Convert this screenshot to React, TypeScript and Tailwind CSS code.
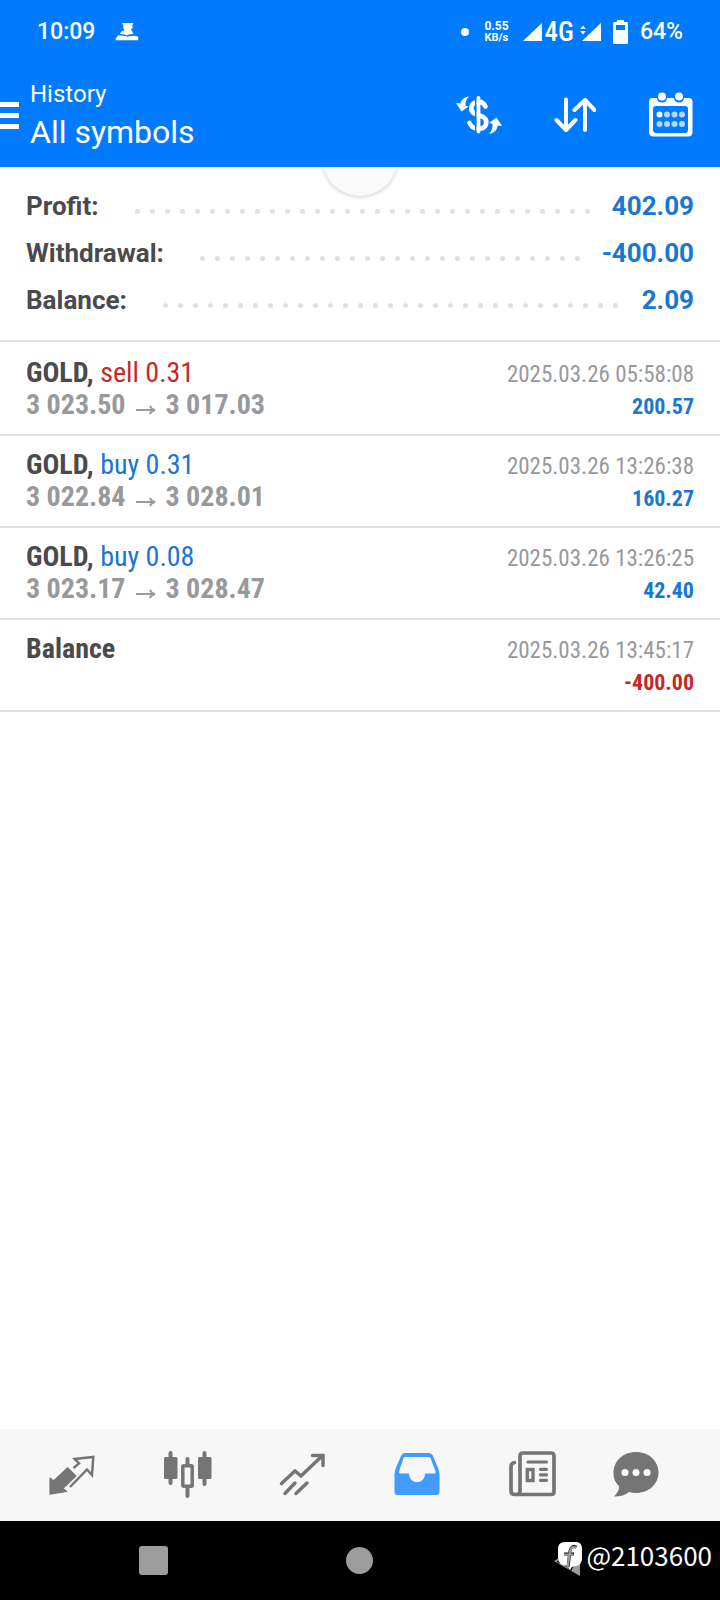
import type { ReactNode } from "react";

const CONDENSED = "font-['Roboto_Condensed','Liberation_Sans_Narrow',sans-serif]";

const summary = [
  { label: "Profit:", value: "402.09" },
  { label: "Withdrawal:", value: "-400.00" },
  { label: "Balance:", value: "2.09" },
];

type Deal = {
  title: string;
  side?: "buy" | "sell";
  volume?: string;
  from?: string;
  to?: string;
  time: string;
  amount: string;
};

const deals: Deal[] = [
  { title: "GOLD,", side: "sell", volume: "0.31", from: "3 023.50", to: "3 017.03", time: "2025.03.26 05:58:08", amount: "200.57" },
  { title: "GOLD,", side: "buy", volume: "0.31", from: "3 022.84", to: "3 028.01", time: "2025.03.26 13:26:38", amount: "160.27" },
  { title: "GOLD,", side: "buy", volume: "0.08", from: "3 023.17", to: "3 028.47", time: "2025.03.26 13:26:25", amount: "42.40" },
  { title: "Balance", time: "2025.03.26 13:45:17", amount: "-400.00" },
];

function StatusBar() {
  return (
    <div className="flex h-16 items-center justify-between px-[37px] text-white">
      <div className="flex items-center gap-5">
        <span className="text-[23px] font-medium leading-7">10:09</span>
        <svg className="h-[18px] w-6" viewBox="0 0 24 18" fill="currentColor" aria-hidden="true">
          <path d="M7 0h11.500l-1.500 3.500 1.500 1-2.500 1.500 2.500 5-4.500.5-2 1-2.500-1-4.500-.5 1-2.300 3.500-1.500-1.500-3 .5-1.500z" />
          <path d="M3 12.300l9 .9.500 1 1-1 7.500-.5 2.500 1.500-.5 3H.5l.5-2z" />
        </svg>
      </div>
      <div className="flex items-center">
        <span className="mr-[15px] size-2 rounded-full bg-white" />
        <span className="mr-[14px] flex flex-col text-[12px] font-bold leading-3">
          <span>0.55</span>
          <span className="text-[11px]">KB/s</span>
        </span>
        <svg className="mr-[3px] h-[18px] w-[19px]" viewBox="0 0 19 18" fill="currentColor" aria-hidden="true">
          <path d="M19 0v18H0z" />
        </svg>
        <span className={`mr-[6px] text-[27px] font-medium leading-7 ${CONDENSED}`}>4G</span>
        <svg className="mr-3 h-[18px] w-[21px]" viewBox="0 0 21 18" fill="currentColor" aria-hidden="true">
          <path d="M21 0v18H2z" />
          <path d="M3 2.500l2.800 3.500H.2zM3 11.500L.2 8h5.600z" />
        </svg>
        <svg className="mr-3 h-6 w-[15px]" viewBox="0 0 15 24" fill="currentColor" aria-hidden="true">
          <path fillRule="evenodd" d="M4 0h7v2h2.500Q15 2 15 3.500v19q0 1.500-1.500 1.500h-12Q0 24 0 22.500v-19Q0 2 1.500 2H4zM3 5v5h9V5z" />
        </svg>
        <span className="text-[23px] font-medium leading-7">64%</span>
      </div>
    </div>
  );
}

function DollarIcon() {
  return (
    <svg className="h-[40px] w-[46px]" viewBox="0 0 46 40" fill="none" stroke="currentColor" aria-hidden="true">
      <path d="M29.500 11.500C27.500 7.500 24.500 6.500 21.500 7c-6.500.5-8 7.500-4 11 3 2.500 7.500 2 10.500 4.500 4.500 4 2 10.500-3 11-5 .8-9.500-.5-11.500-5.500" strokeWidth="4.600" strokeLinecap="round" />
      <path d="M19.800 3v34" stroke="#007aff" strokeWidth="1.700" />
      <path d="M22.500 3v33.500" strokeWidth="3.800" strokeLinecap="round" />
      <path d="M13 1.500C8.500 2 5 4.500 4.500 8.500L0 8l5.500 8.500L12.500 11.500l-3-.8C9 7 10.500 4 13 1.500z" fill="currentColor" stroke="none" />
      <path d="M33 39c5-1 8.500-4 8.500-8.500l4.500.5-5.500-8.500-7.500 5.500 3.500.8c.5 4-1 7.700-3.500 10.200z" fill="currentColor" stroke="none" />
    </svg>
  );
}

function SortIcon() {
  return (
    <svg className="h-[36px] w-[42px]" viewBox="0 0 42 36" fill="none" stroke="currentColor" strokeWidth="4" strokeLinecap="round" strokeLinejoin="round" aria-hidden="true">
      <path d="M12 2.500v30M2.500 23l9.500 10 9.500-10" />
      <path d="M31 33V3M20.500 13L31 3l9.500 10" />
    </svg>
  );
}

function CalendarIcon() {
  return (
    <svg className="h-[46px] w-[46px]" viewBox="0 0 46 46" fill="currentColor" aria-hidden="true">
      <path fillRule="evenodd" d="M4 6h5q.5 4.500 5 4.500T19 6h7q.5 4.500 5 4.500T36 6h5q3.500 0 3.500 4v30q0 4.500-4.500 4.500H5.500q-4.500 0-4.500-4.500V10q0-4 3-4zM8 14q-3 0-3 3v21q0 3 3 3h29q3 0 3-3V17q0-3-3-3z" />
      <circle cx="14" cy="4.500" r="4" />
      <circle cx="31" cy="4.500" r="4" />
      <circle cx="11.500" cy="22.500" r="3" />
      <g opacity=".7">
        <circle cx="19" cy="22.500" r="3" />
        <circle cx="26.500" cy="22.500" r="3" />
        <circle cx="34" cy="22.500" r="3" />
        <circle cx="11.500" cy="32" r="3" />
        <circle cx="19" cy="32" r="3" />
        <circle cx="26.500" cy="32" r="3" />
        <circle cx="34" cy="32" r="3" />
      </g>
    </svg>
  );
}

function Header() {
  return (
    <header className="relative z-10 bg-[#007aff]">
      <StatusBar />
      <div className="flex h-[103px] items-center justify-between pr-[26px] text-white">
        <div className="flex items-center gap-[11px]">
          <button type="button" aria-label="Open menu" className="flex flex-col gap-[6px]">
            <span className="h-[5px] w-[19px] bg-white" />
            <span className="h-[5px] w-[19px] bg-white" />
            <span className="h-[5px] w-[19px] bg-white" />
          </button>
          <div>
            <p className="text-[24px] leading-8">History</p>
            <h1 className="text-[32px] leading-[44px]">All symbols</h1>
          </div>
        </div>
        <div className="flex items-center gap-[52px] pb-[2px]">
          <button type="button" aria-label="Currency"><DollarIcon /></button>
          <button type="button" aria-label="Sort"><SortIcon /></button>
          <button type="button" aria-label="Choose period"><CalendarIcon /></button>
        </div>
      </div>
    </header>
  );
}

function Summary() {
  return (
    <dl className="border-b-2 border-[#e1e1e1] px-[26px] py-4">
      {summary.map(({ label, value }) => (
        <div key={label} className="flex h-[47px] items-center text-[26px] font-bold">
          <dt className="text-[#4a4a4d]">{label}</dt>
          <dd className="flex flex-1 items-center text-[#1976d2]">
            <span className="ml-[31px] mr-4 mt-[10px] h-[15px] flex-1 bg-[radial-gradient(circle,#e0e0e0_2px,transparent_3px)] bg-[length:15px_15px]" />
            {value}
          </dd>
        </div>
      ))}
    </dl>
  );
}

function DealRow({ deal }: { deal: Deal }) {
  return (
    <li className={`flex h-[92px] justify-between border-b-2 border-[#e1e1e1] px-[26px] pt-[13px] leading-8 ${CONDENSED}`}>
      <div>
        <p className="text-[28px] text-[#4a4a4d]">
          <span className="font-bold">{deal.title}</span>{" "}
          {deal.side && (
            <span className={deal.side === "sell" ? "text-[#c62828]" : "text-[#1976d2]"}>
              {deal.side} {deal.volume}
            </span>
          )}
        </p>
        {deal.from && (
          <p className="flex items-center gap-[10px] text-[28px] font-bold text-[#97999b]">
            {deal.from}
            <svg className="mt-[10px] h-3 w-5" viewBox="0 0 20 12" fill="none" stroke="currentColor" strokeWidth="2" aria-label="to">
              <path d="M0 6h19M14 2q1 3 5 4q-4 1-5 4" />
            </svg>
            {deal.to}
          </p>
        )}
      </div>
      <div className="pt-[2px] text-right">
        <p className="text-[23px] text-[#97999b]">{deal.time}</p>
        <p className={`text-[22px] font-bold ${deal.amount.startsWith("-") ? "text-[#c62828]" : "text-[#1976d2]"}`}>{deal.amount}</p>
      </div>
    </li>
  );
}

const tabs: { name: string; icon: ReactNode }[] = [
  {
    name: "Quotes",
    icon: (
      <>
        <path d="M19.800 15.800l8 8.200-13 12.500 3.700 3-16.500 2.700V26l3.500 3z" fill="currentColor" stroke="currentColor" strokeWidth="1.200" strokeLinejoin="round" />
        <path d="M25.500 16l5.500-4.500-4.300-4.500L45.300 5 44 23l-5-5.500-17 17.500" fill="none" stroke="currentColor" strokeWidth="2.500" strokeLinejoin="miter" />
      </>
    ),
  },
  {
    name: "Charts",
    icon: (
      <>
        <path d="M7.500 1v30M41.500 1v31M24.500 7v6M24.500 36v8" stroke="currentColor" strokeWidth="4" strokeLinecap="round" />
        <rect x="1" y="5" width="13.500" height="22" rx="1.500" fill="currentColor" />
        <rect x="35" y="5" width="13.500" height="22" rx="1.500" fill="currentColor" />
        <rect x="19.800" y="13.700" width="9.400" height="20.600" rx="1" fill="#f7f7f7" stroke="currentColor" strokeWidth="3.500" />
      </>
    ),
  },
  {
    name: "Trade",
    icon: (
      <>
        <path d="M3.500 31.500L17 19l6 5L43 5M34.500 3.500h10.500v10" fill="none" stroke="currentColor" strokeWidth="3.500" strokeLinecap="round" strokeLinejoin="miter" />
        <path d="M7 41.500L17 31M18 41.500L29 31" fill="none" stroke="currentColor" strokeWidth="3.500" strokeLinecap="round" />
      </>
    ),
  },
  {
    name: "History",
    icon: (
      <path fillRule="evenodd" d="M11.500 1h24q3 0 4.500 3l5.500 13q1 3 1 6v17q0 3-3 3H4.500q-3 0-3-3V23q0-3 1-6L8 4q1.500-3 3.500-3zM12.500 5q-1.500 0-2 1L6 19.500q-.5 2 1 2h8.500q.8 0 .8 2a7.800 7.500 0 0 0 15.500 0q0-2 .7-2h9q1.500 0 1-2L37.500 6q-.5-1-2-1z" fill="currentColor" />
    ),
  },
  {
    name: "News",
    icon: (
      <>
        <path d="M6.500 10.500Q3 11 3 15v24q0 3.500 4 3.500H43q3 0 3-3V4q0-3-3-3H15q-3 0-3 3v35q0 3.500-3.500 3.500" fill="none" stroke="currentColor" strokeWidth="3.700" strokeLinecap="round" />
        <path d="M20 10h18.500M32.500 17.300h6M32.500 22.800h6M32.500 28.300h6" stroke="currentColor" strokeWidth="3.200" strokeLinecap="round" />
        <rect x="19.300" y="17.500" width="5.700" height="11" fill="none" stroke="currentColor" strokeWidth="3.400" />
      </>
    ),
  },
  {
    name: "Messages",
    icon: (
      <>
        <path d="M24 0C11 0 1.500 9 1.500 21c0 6 2 9.500 5.500 13q.5 5-5 10.500 10 0 15-4.500 3.500 1 7 1c13 0 22.500-9 22.500-20.500S37 0 24 0z" fill="currentColor" />
        <g fill="#fff">
          <circle cx="13" cy="20.500" r="3.500" />
          <circle cx="24" cy="20.500" r="3.500" />
          <circle cx="35" cy="20.500" r="3.500" />
        </g>
      </>
    ),
  },
];

function TabBar() {
  return (
    <nav className="grid h-[92px] grid-cols-[115fr_115fr_115fr_115fr_115fr_92fr] items-center bg-[#f7f7f7] pl-[14px] pr-[38px]">
      {tabs.map(({ name, icon }) => (
        <button
          key={name}
          type="button"
          aria-label={name}
          className={`flex justify-center ${name === "History" ? "text-[#429bff]" : "text-[#757575]"}`}
        >
          <svg className="size-12 overflow-visible" viewBox="0 -1 48 48" aria-hidden="true">{icon}</svg>
        </button>
      ))}
    </nav>
  );
}

function SystemBar() {
  return (
    <div className="relative grid h-[79px] grid-cols-3 items-center justify-items-center bg-black px-[50px] text-[#9c9c9c]">
      <button type="button" aria-label="Recent apps" className="size-[29px] rounded-[3px] bg-current" />
      <button type="button" aria-label="Home" className="size-[27px] rounded-full bg-current" />
      <button type="button" aria-label="Back">
        <svg className="h-[30px] w-[26px]" viewBox="0 0 26 30" fill="currentColor" aria-hidden="true">
          <path d="M26 0v30L0 15z" />
        </svg>
      </button>
      <div className="absolute right-2 top-[18px] flex items-center gap-[3px] text-white">
        <svg className="h-7 w-[26px] overflow-visible" viewBox="0 0 26 28" aria-hidden="true">
          <path d="M2 0h24v22l-9 3-3 5-4-4-10-5 1-2z" fill="#000" />
          <path d="M8 1h11q6 0 6 7v9q0 7-6 8l-4 1-2 3-3-4Q1 24 1 17V8q0-7 7-7z" fill="#fff" />
          <path d="M19.500 6q-5.500-2-6.500 4l-2 16M7 13h10" fill="none" stroke="#111" strokeWidth="3" />
          <path d="M19 6.500q-5-2-6 4l-2.500 16M7 13.500h9.500" fill="none" stroke="#9c9c9c" strokeWidth="2.200" />
        </svg>
        <span className="font-['Noto_Sans_CJK_SC',sans-serif] text-[26px] leading-8">@2103600</span>
      </div>
    </div>
  );
}

export default function App() {
  return (
    <div className="flex min-h-screen flex-col bg-white font-['Roboto',sans-serif]">
      <Header />
      <main className="relative flex-1">
        <div className="absolute -top-[47px] left-1/2 size-[76px] -translate-x-1/2 rounded-full bg-[#fafafa] shadow-[0_1px_4px_rgba(0,0,0,0.2)]" />
        <Summary />
        <ul className="pt-[2px]">
          {deals.map((deal) => (
            <DealRow key={deal.time} deal={deal} />
          ))}
        </ul>
      </main>
      <TabBar />
      <SystemBar />
    </div>
  );
}
